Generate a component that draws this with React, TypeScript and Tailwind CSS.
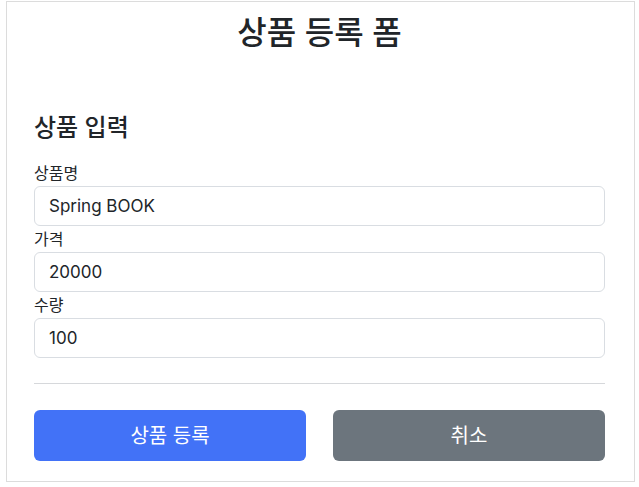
import React from "react";

const font = { fontFamily: 'Inter, "Noto Sans CJK KR", sans-serif' };

function Field({ label, value }: { label: string; value: string }) {
  return (
    <div className="flex flex-col">
      <label className="h-[26px] pt-[1px] text-[16px] leading-[24px] text-[#212529]">{label}</label>
      <div className="flex h-[40px] items-center rounded-[6px] border border-[#d9dde2] bg-white px-[14px] pt-[1px] text-[17px] text-[#212529]">
        {value}
      </div>
    </div>
  );
}

export default function App() {
  return (
    <div className="bg-white pl-[6px] pt-[1px]" style={font}>
      <div className="flex h-[481px] w-[629px] flex-col border border-[#dcdcdc] pl-[27px] pr-[29px] pt-[12px]">
        <h2 className="text-center text-[32px] font-medium leading-[38px] text-[#212529]">상품 등록 폼</h2>
        <h4 className="mt-[61px] text-[24px] font-medium leading-[29px] text-[#212529]">상품 입력</h4>
        <div className="mt-[18px] flex flex-col">
          <Field label="상품명" value="Spring BOOK" />
          <Field label="가격" value="20000" />
          <Field label="수량" value="100" />
        </div>
        <div className="mt-[25px] h-[1px] bg-[#d6d8db]" />
        <div className="mt-[26px] grid grid-cols-2 gap-[27px]">
          <button className="h-[51px] rounded-[6px] bg-[#4272f7] text-[20px] text-white">상품 등록</button>
          <button className="h-[51px] rounded-[6px] bg-[#6c757d] text-[20px] text-white">취소</button>
        </div>
      </div>
    </div>
  );
}
